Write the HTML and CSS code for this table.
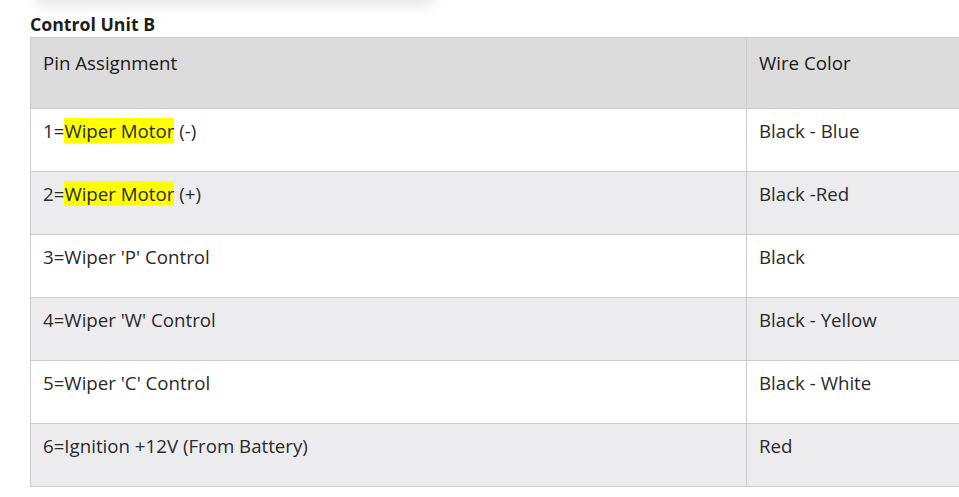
FILE: index.html
```html
<!DOCTYPE html>
<html>
<head>
<meta charset="utf-8">
<link rel="stylesheet" href="styles.css">
</head>
<body>
<div class="topbar"></div>
<div class="content">
  <h3 class="title">Control Unit B</h3>
  <table class="pins">
    <thead>
      <tr><th class="col-pin">Pin Assignment</th><th class="col-wire">Wire Color</th></tr>
    </thead>
    <tbody>
      <tr><td>1=<span class="hl">Wiper Motor</span> (-)</td><td>Black - Blue</td></tr>
      <tr><td>2=<span class="hl">Wiper Motor</span> (+)</td><td>Black -Red</td></tr>
      <tr><td>3=Wiper 'P' Control</td><td>Black</td></tr>
      <tr><td>4=Wiper 'W' Control</td><td>Black - Yellow</td></tr>
      <tr><td>5=Wiper 'C' Control</td><td>Black - White</td></tr>
      <tr><td>6=Ignition +12V (From Battery)</td><td>Red</td></tr>
    </tbody>
  </table>
</div>
</body>
</html>
```
FILE: styles.css
```css
html, body {
  margin: 0;
  padding: 0;
  background: #ffffff;
  overflow: hidden;
}
body {
  font-family: "Open Sans", "Noto Sans", sans-serif;
  color: #222;
  width: 959px;
  height: 497px;
  position: relative;
}
.topbar {
  position: absolute;
  left: 40px;
  top: -40px;
  width: 390px;
  height: 40px;
  background: #fff;
  box-shadow: 0 0 16px 4px rgba(0,0,0,0.12);
}
.content {
  padding: 12px 0 0 30px;
}
.title {
  margin: 0;
  font-size: 17.7px;
  font-weight: 700;
  line-height: 25px;
  color: #1e1e1e;
}
.pins {
  border-collapse: collapse;
  width: 1000px;
  font-size: 18.7px;
  color: #2a2a2a;
}
.pins th, .pins td {
  border: 1px solid #cccccc;
  text-align: left;
  vertical-align: top;
  font-weight: 400;
  padding: 7px 12px 0 12px;
  line-height: 30px;
}
.pins th {
  background: #dcdcdc;
  height: 60px;
  padding-top: 10px;
  color: #1a1a1a;
}
.pins td {
  height: 55px;
}
.col-pin { width: 691px; }
.pins tbody tr:nth-child(even) td { background: #ececee; }
.hl { background: #ffff00; }
```
